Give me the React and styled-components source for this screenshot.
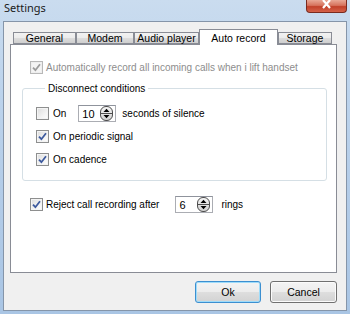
import React from "react";
import styled, { createGlobalStyle } from "styled-components";

const GlobalStyle = createGlobalStyle`
  body {
    margin: 0;
    font-family: "Liberation Sans", Arial, sans-serif;
    font-size: 10px;
    color: #000;
  }
`;

const Window = styled.div`
  width: 350px;
  height: 314px;
  box-sizing: border-box;
  padding: 0 3px 3px 3px;
  display: flex;
  flex-direction: column;
  overflow: hidden;
  background: linear-gradient(180deg, #cadcef 0%, #bcd3ec 30%, #b3cce8 60%, #a9c5e4 100%);
`;

const TitleBar = styled.div`
  height: 21px;
  display: flex;
  justify-content: space-between;
  align-items: flex-start;
`;

const Title = styled.span`
  font-family: "Noto Sans", "DejaVu Sans", sans-serif;
  font-size: 11px;
  line-height: 16px;
  padding-left: 1px;
  color: #1a1a1a;
`;

const CloseButton = styled.div`
  width: 41px;
  height: 13px;
  box-sizing: border-box;
  border: 1px solid #7a2b1f;
  border-top: none;
  border-radius: 0 0 4px 4px;
  background: linear-gradient(180deg, #e9a896 0%, #d7735d 45%, #c2412a 55%, #d4624a 100%);
  display: flex;
  justify-content: center;
  align-items: flex-start;
`;

const Client = styled.div`
  flex: 1;
  background: #f0f0f0;
  border: 1px solid #8595a9;
  padding: 7px 0 0 6px;
  display: flex;
  flex-direction: column;
`;

const TabRow = styled.div`
  height: 15px;
  display: flex;
  align-items: flex-end;
  padding-left: 3px;
  position: relative;
  z-index: 2;
`;

const Tab = styled.div`
  width: ${({ w }) => w}px;
  height: ${({ active }) => (active ? 16 : 12)}px;
  margin-bottom: ${({ active }) => (active ? -1 : 0)}px;
  box-sizing: border-box;
  border: 1px solid #898c95;
  border-bottom: ${({ active }) => (active ? "none" : "1px solid #898c95")};
  background: ${({ active }) =>
    active ? "#fff" : "linear-gradient(180deg, #f2f2f2 0%, #ebebeb 50%, #dddddd 51%, #cfcfcf 100%)"};
  display: flex;
  justify-content: center;
  align-items: ${({ active }) => (active ? "flex-start" : "center")};
  padding-top: ${({ active }) => (active ? 3 : 1)}px;
  font-size: 10.5px;
  line-height: 11px;
`;

const Panel = styled.div`
  width: 327px;
  height: 229px;
  box-sizing: border-box;
  border: 1px solid #898c95;
  background: #fff;
  display: flex;
  flex-direction: column;
`;

const CheckRow = styled.label`
  display: flex;
  align-items: center;
  height: ${({ h }) => h || 13}px;
  margin-left: ${({ indent }) => indent || 0}px;
  margin-top: ${({ top }) => top || 0}px;
  color: ${({ disabled }) => (disabled ? "#8d8d8d" : "#000")};
  white-space: nowrap;
`;

const Box = styled.span`
  width: 13px;
  height: 13px;
  box-sizing: border-box;
  border: 1px solid ${({ disabled }) => (disabled ? "#b8b8b8" : "#8e8f8f")};
  background: ${({ disabled }) =>
    disabled ? "#f4f4f4" : "linear-gradient(135deg, #dcdcdc 0%, #f3f3f3 60%, #fff 100%)"};
  box-shadow: inset 0 0 0 1px ${({ disabled }) => (disabled ? "#eee" : "#f4f4f4")};
  margin-right: 1px;
  display: flex;
  align-items: center;
  justify-content: center;
  flex-shrink: 0;
`;

const Label = styled.span`
  margin-left: ${({ gap }) => gap || 2}px;
`;

const Group = styled.fieldset`
  width: 305px;
  box-sizing: border-box;
  margin: 8px 0 0 11px;
  padding: 0 0 14px 13px;
  border: 1px solid #d5dfe5;
  border-radius: 3px;
  min-width: 0;
`;

const Legend = styled.legend`
  margin-left: 9px;
  padding: 0 3px;
  font-size: 10px;
  line-height: 13px;
`;

const Spin = styled.div`
  width: 38px;
  height: 17px;
  box-sizing: border-box;
  border: 1px solid #abadb3;
  border-top-color: #8f939c;
  background: #fff;
  display: flex;
  align-items: center;
  justify-content: space-between;
  padding: 0 2px 0 3px;
  margin-left: ${({ ml }) => ml}px;
  margin-right: ${({ mr }) => mr}px;
  font-size: 11px;
`;

const Footer = styled.div`
  width: 327px;
  display: flex;
  justify-content: flex-end;
  gap: 9px;
  margin-top: 8px;
`;

const Button = styled.div`
  width: ${({ w }) => w}px;
  height: 22px;
  box-sizing: border-box;
  border: 1px solid ${({ primary }) => (primary ? "#3c8fd0" : "#707070")};
  border-radius: 3px;
  background: linear-gradient(180deg, #f4f4f4 0%, #ececec 48%, #dedede 50%, #d2d2d2 100%);
  box-shadow: inset 0 0 0 1px ${({ primary }) => (primary ? "#9fdcfa" : "#fbfbfb")};
  display: flex;
  align-items: center;
  justify-content: center;
  font-size: 10.5px;
`;

const Check = ({ disabled }) => (
  <svg width="9" height="9" viewBox="0 0 9 9">
    <path
      d="M1 4.6 L3.4 7.2 L8 1.2"
      fill="none"
      stroke={disabled ? "#9c9c9c" : "#3d5a9e"}
      strokeWidth="1.8"
    />
  </svg>
);

const CheckBox = ({ checked, disabled }) => (
  <Box disabled={disabled}>{checked && <Check disabled={disabled} />}</Box>
);

const SpinArrows = () => (
  <svg width="13" height="15" viewBox="0 0 13 15">
    <defs>
      <linearGradient id="sg" x1="0" y1="0" x2="0" y2="1">
        <stop offset="0" stopColor="#f6f6f6" />
        <stop offset="1" stopColor="#cfcfcf" />
      </linearGradient>
    </defs>
    <rect x="0.5" y="0.5" width="12" height="14" rx="5.5" fill="url(#sg)" stroke="#4d4d4d" />
    <line x1="1" y1="7.5" x2="12" y2="7.5" stroke="#4d4d4d" />
    <path d="M3.5 6 L6.5 2.8 L9.5 6 Z" fill="#000" />
    <path d="M3.5 9 L6.5 12.2 L9.5 9 Z" fill="#000" />
  </svg>
);

const Spinner = ({ value, ml, mr }) => (
  <Spin ml={ml} mr={mr}>
    <span>{value}</span>
    <SpinArrows />
  </Spin>
);

const tabs = [
  { name: "General", w: 63 },
  { name: "Modem", w: 58 },
  { name: "Audio player", w: 65 },
  { name: "Auto record", w: 79, active: true },
  { name: "Storage", w: 54 },
];

export default function App() {
  return (
    <>
      <GlobalStyle />
      <Window>
        <TitleBar>
          <Title>Settings</Title>
          <CloseButton>
            <svg width="11" height="9" viewBox="0 0 11 9">
              <path d="M2 0 L9 8 M9 0 L2 8" stroke="#fff" strokeWidth="2.2" />
            </svg>
          </CloseButton>
        </TitleBar>
        <Client>
          <TabRow>
            {tabs.map((t) => (
              <Tab key={t.name} w={t.w} active={t.active}>
                {t.name}
              </Tab>
            ))}
          </TabRow>
          <Panel>
            <CheckRow indent={19} top={16} disabled>
              <CheckBox checked disabled />
              <Label>Automatically record all incoming calls when i lift handset</Label>
            </CheckRow>
            <Group>
              <Legend>Disconnect conditions</Legend>
              <CheckRow h={17} top={10}>
                <CheckBox />
                <Label gap={3}>On</Label>
                <Spinner value="10" ml={12} mr={6} />
                <span>seconds of silence</span>
              </CheckRow>
              <CheckRow top={8}>
                <CheckBox checked />
                <Label gap={3}>On periodic signal</Label>
              </CheckRow>
              <CheckRow top={10}>
                <CheckBox checked />
                <Label gap={3}>On cadence</Label>
              </CheckRow>
            </Group>
            <CheckRow h={17} indent={19} top={15}>
              <CheckBox checked />
              <Label>Reject call recording after</Label>
              <Spinner value="6" ml={16} mr={8} />
              <span>rings</span>
            </CheckRow>
          </Panel>
          <Footer>
            <Button w={66} primary>
              Ok
            </Button>
            <Button w={67}>Cancel</Button>
          </Footer>
        </Client>
      </Window>
    </>
  );
}
